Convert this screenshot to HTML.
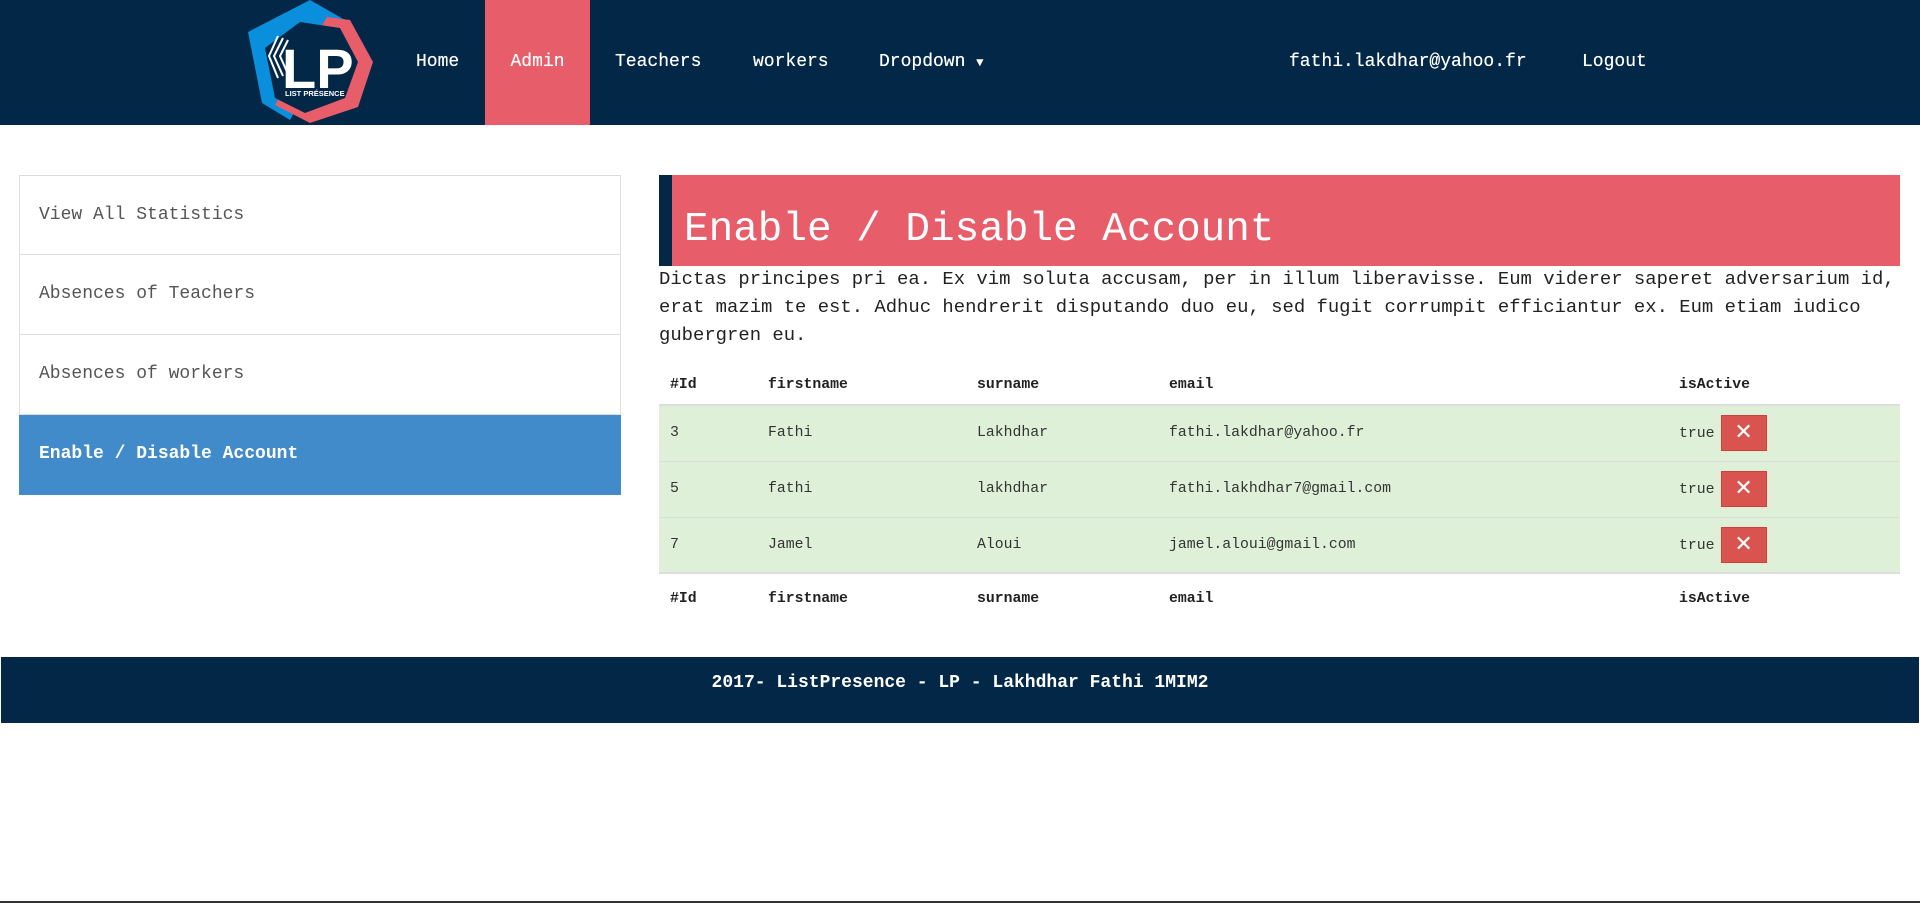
<!DOCTYPE html>
<html><head><meta charset="utf-8"><style>
*{margin:0;padding:0;box-sizing:border-box}
body{width:1920px;height:903px;background:#fff;font-family:"Liberation Mono","DejaVu Sans Mono",monospace;position:relative;overflow:hidden;color:#333}
.nav{position:absolute;left:0;top:0;width:1920px;height:125px;background:#032847}
.nav a{position:absolute;top:0;height:125px;line-height:125px;color:#fff;font-size:18px;text-decoration:none;text-shadow:0 0 0.4px #fff}
.admin{background:#e85d6a;width:105px;left:485px;text-align:center}
.side{position:absolute;left:19px;top:175px;width:602px}
.side div{height:80px;line-height:78px;border:1px solid #ddd;border-top:none;padding-left:19px;font-size:18px;color:#555}
.side div:first-child{border-top:1px solid #ddd}
.side .act{background:#428bca;border-color:#428bca;color:#fff;font-weight:bold}
.head{position:absolute;left:659px;top:175px;width:1241px;height:91px;background:#e85d6a;border-left:13px solid #032847}
.head h1{font-weight:normal;color:#fff;font-size:41px;position:absolute;left:12px;top:31px;line-height:48px}
.p{position:absolute;left:659px;top:265px;width:1245px;font-size:18.9px;line-height:28px;color:#222}
table{position:absolute;left:659px;top:366px;width:1241px;border-collapse:collapse;font-size:14.8px}
td,th{text-align:left;padding:0 0 0 11px;vertical-align:middle}
th{height:39px;font-weight:bold;color:#222}
thead th{border-bottom:2px solid #ddd}
tbody tr{background:#dff0d8;height:56px}
tbody td{border-top:1px solid #ddd;padding-top:0}
tfoot th{height:50px;border-top:2px solid #ddd}
.btn{display:inline-block;width:46px;height:36px;background:#d9534f;border:1px solid #d43f3a;color:#fff;text-align:center;line-height:34px;font-size:22px;font-weight:bold;vertical-align:middle;margin-left:6px;font-family:"DejaVu Sans",sans-serif}
.foot{position:absolute;left:1px;top:657px;width:1918px;height:66px;background:#032847;color:#fff;font-size:18px;font-weight:bold;text-align:center;line-height:52px}
.bl{position:absolute;left:0;top:901px;width:1920px;height:2px;background:#333}
</style></head><body>
<div class="nav">
<svg style="position:absolute;left:230px;top:0" width="150" height="125" viewBox="230 0 150 125">
<polygon points="248,32 310,0 345,20 290,120 262,103" fill="#0a8fdc"/>
<polygon points="327,17 350,20 373,62 358,107 310,123 275,105" fill="#e85d6a"/>
<polygon points="265,48 300,22 340,28 358,62 345,98 305,113 275,98" fill="#032847"/>
<text x="282" y="88" fill="#fff" font-family="Liberation Sans,sans-serif" font-weight="bold" font-size="56">LP</text>
<path d="M283 38 l-9 18 l9 20 M278 36 l-9 20 l9 22 M288 40 l-8 16 l8 18" stroke="#fff" stroke-width="2" fill="none"/>
<text x="285" y="96" fill="#fff" font-family="Liberation Sans,sans-serif" font-weight="bold" font-size="7.5">LIST PRÉSENCE</text>
</svg>
<a style="left:416px">Home</a>
<a class="admin">Admin</a>
<a style="left:615px">Teachers</a>
<a style="left:753px">workers</a>
<a style="left:879px">Dropdown <span style="font-size:12px">▼</span></a>
<a style="left:1289px">fathi.lakdhar@yahoo.fr</a>
<a style="left:1582px">Logout</a>
</div>
<div class="side">
<div>View All Statistics</div>
<div>Absences of Teachers</div>
<div>Absences of workers</div>
<div class="act">Enable / Disable Account</div>
</div>
<div class="head"><h1>Enable / Disable Account</h1></div>
<div class="p">Dictas principes pri ea. Ex vim soluta accusam, per in illum liberavisse. Eum viderer saperet adversarium id, erat mazim te est. Adhuc hendrerit disputando duo eu, sed fugit corrumpit efficiantur ex. Eum etiam iudico gubergren eu.</div>
<table>
<colgroup><col style="width:98px"><col style="width:209px"><col style="width:192px"><col style="width:510px"><col></colgroup>
<thead><tr><th>#Id</th><th>firstname</th><th>surname</th><th>email</th><th>isActive</th></tr></thead>
<tbody>
<tr><td>3</td><td>Fathi</td><td>Lakhdhar</td><td>fathi.lakdhar@yahoo.fr</td><td>true<span class="btn">✕</span></td></tr>
<tr><td>5</td><td>fathi</td><td>lakhdhar</td><td>fathi.lakhdhar7@gmail.com</td><td>true<span class="btn">✕</span></td></tr>
<tr><td>7</td><td>Jamel</td><td>Aloui</td><td>jamel.aloui@gmail.com</td><td>true<span class="btn">✕</span></td></tr>
</tbody>
<tfoot><tr><th>#Id</th><th>firstname</th><th>surname</th><th>email</th><th>isActive</th></tr></tfoot>
</table>
<div class="foot">2017- ListPresence - LP - Lakhdhar Fathi 1MIM2</div>
<div class="bl"></div>
</body></html>
